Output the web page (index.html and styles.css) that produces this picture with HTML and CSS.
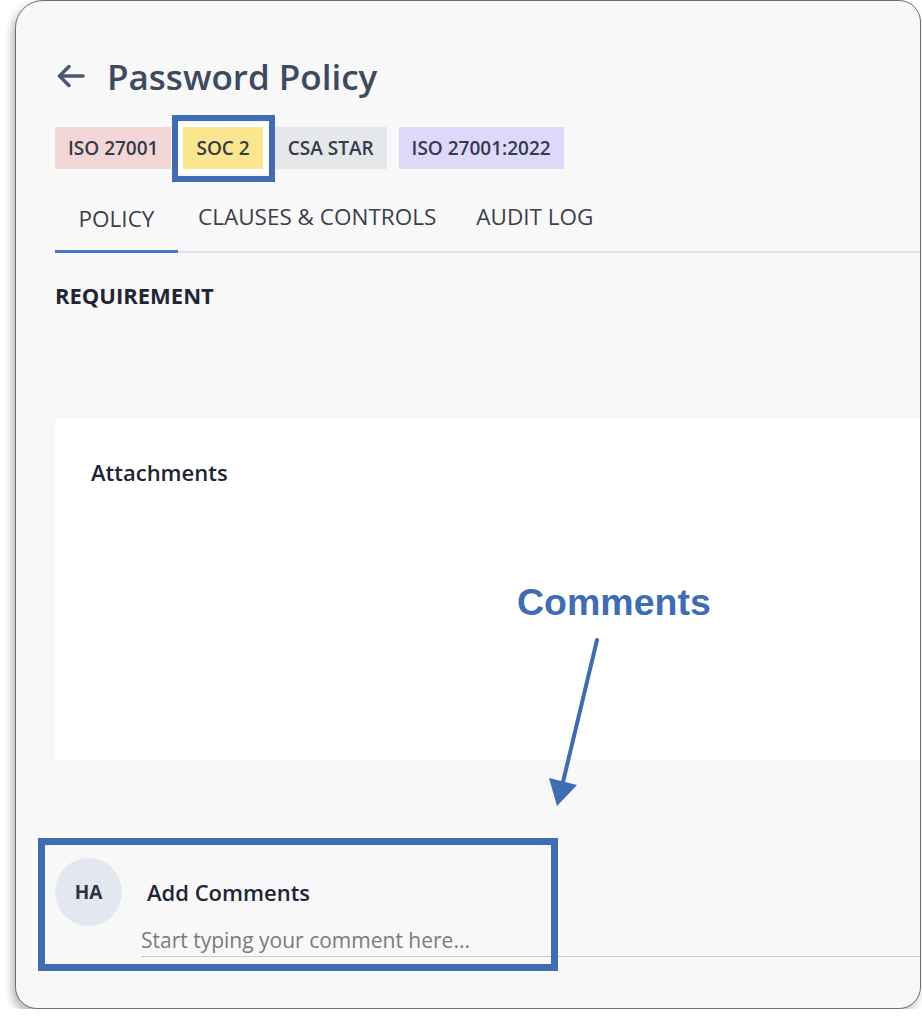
FILE: index.html
```html
<!DOCTYPE html>
<html lang="en">
<head>
    <meta charset="UTF-8">
    <meta name="viewport" content="width=device-width, initial-scale=1.0">
    <title>Password Policy</title>
    <link rel="stylesheet" href="styles.css">
</head>
<body>
    <div class="window">
        <div class="title-row">
            <svg class="back" width="32" height="32" viewBox="0 0 32 32" fill="none" stroke="currentColor" stroke-width="3.5" stroke-linecap="round" stroke-linejoin="round">
                <path d="M28 16H5"/>
                <path d="M14 6.5L4.5 16L14 25.5"/>
            </svg>
            <h1>Password Policy</h1>
        </div>

        <div class="tags">
            <span class="tag tag-pink">ISO 27001</span>
            <span class="tag tag-yellow marked">SOC 2</span>
            <span class="tag tag-gray">CSA STAR</span>
            <span class="tag tag-purple">ISO 27001:2022</span>
        </div>

        <div class="tabs">
            <div class="tab active">POLICY</div>
            <div class="tab">CLAUSES &amp; CONTROLS</div>
            <div class="tab">AUDIT LOG</div>
        </div>

        <h2 class="section-title">REQUIREMENT</h2>

        <div class="attachments">
            <h3>Attachments</h3>
        </div>

        <div class="comment">
            <div class="avatar">HA</div>
            <div class="comment-body">
                <div class="comment-title">Add Comments</div>
                <input type="text" class="comment-input" placeholder="Start typing your comment here...">
            </div>
            <div class="mark-box"></div>
        </div>

        <!-- annotation -->
        <div class="note">Comments</div>
        <svg class="note-arrow" width="70" height="185" viewBox="0 0 70 185">
            <line x1="61" y1="9" x2="27" y2="151" stroke="#3f6db5" stroke-width="4" stroke-linecap="round"/>
            <polygon points="21,175 13,147 41,154" fill="#3f6db5"/>
        </svg>
    </div>
</body>
</html>
```

FILE: styles.css
```css
body {
    margin: 0;
    background-color: #fff;
    font-family: "Open Sans", sans-serif;
    overflow: hidden;
}

.window {
    position: relative;
    box-sizing: border-box;
    width: 906px;
    height: 1009px;
    margin-left: 15px;
    padding-left: 39px;
    background-color: #f8f8f8;
    border: 1px solid #6e6e6e;
    border-radius: 28px 22px 22px 22px;
    box-shadow: -3px 5px 9px rgba(0, 0, 0, 0.28);
    overflow: hidden;
}

.title-row {
    display: flex;
    align-items: center;
    height: 48px;
    margin-top: 51px;
    color: #3e4a5e;
}

.back {
    color: #4b576e;
    margin-right: 20px;
}

h1 {
    margin: 0;
    font-size: 35px;
    font-weight: 600;
}

.tags {
    display: flex;
    gap: 12px;
    margin-top: 27px;
}

.tag {
    position: relative;
    display: flex;
    align-items: center;
    height: 42px;
    padding: 0 13px;
    font-size: 19px;
    font-weight: 600;
    color: #343b4a;
}

.tag-pink { background-color: #f4d6d6; }
.tag-yellow { background-color: #f9e68f; }
.tag-gray { background-color: #e5e7eb; }
.tag-purple { background-color: #ded8fb; }

.marked {
    box-shadow: 0 0 0 5px #fff;
}

.marked::after {
    content: "";
    position: absolute;
    top: -12px;
    bottom: -13px;
    left: -11px;
    right: -12px;
    border: 6.5px solid #3f6db5;
}

.tabs {
    display: flex;
    margin-top: 17px;
    border-bottom: 2px solid #e0e2ea;
}

.tab {
    display: flex;
    align-items: center;
    box-sizing: border-box;
    height: 67px;
    margin-bottom: -2px;
    padding: 0 20px 3px;
    font-size: 22.5px;
    color: #3b3f48;
    border-bottom: 3px solid transparent;
}

.tab.active {
    width: 123px;
    padding: 0;
    justify-content: center;
    border-bottom-color: #4a77c4;
}

.section-title {
    margin: 27px 0 0;
    font-size: 22px;
    font-weight: 700;
    line-height: 30px;
    color: #1f2636;
}

.attachments {
    box-sizing: border-box;
    height: 341px;
    margin-top: 109px;
    padding: 38px 36px;
    background-color: #fff;
}

.attachments h3 {
    margin: 0;
    font-size: 22px;
    font-weight: 600;
    line-height: 30px;
    color: #1e2535;
}

.comment {
    position: relative;
    display: flex;
    margin-top: 98px;
}

.avatar {
    display: flex;
    align-items: center;
    justify-content: center;
    flex-shrink: 0;
    width: 67px;
    height: 68px;
    border-radius: 50%;
    background-color: #e3e7ef;
    font-size: 19px;
    font-weight: 700;
    color: #2c3546;
}

.comment-body {
    flex: 1;
    margin-left: 19px;
    padding-top: 19px;
}

.comment-title {
    padding-left: 6px;
    font-size: 22px;
    font-weight: 600;
    line-height: 30px;
    color: #1e2535;
}

.comment-input {
    display: block;
    box-sizing: border-box;
    width: 100%;
    height: 30.5px;
    margin-top: 19px;
    padding: 0 0 1px;
    border: none;
    border-bottom: 1.5px solid #c9c9c9;
    background: transparent;
    font-family: "Open Sans", sans-serif;
    font-size: 21px;
    line-height: 28px;
    outline: none;
}

.comment-input::placeholder {
    color: #7b7b7b;
}

.mark-box {
    position: absolute;
    top: -20px;
    left: -17px;
    width: 520px;
    height: 133px;
    box-sizing: border-box;
    border: 7px solid #3f6db5;
}

.note {
    position: absolute;
    top: 583px;
    left: 501px;
    font-family: "Liberation Sans", Arial, sans-serif;
    font-size: 37.5px;
    font-weight: 700;
    line-height: 37.5px;
    color: #3f6db5;
}

.note-arrow {
    position: absolute;
    top: 630px;
    left: 520px;
}
```
